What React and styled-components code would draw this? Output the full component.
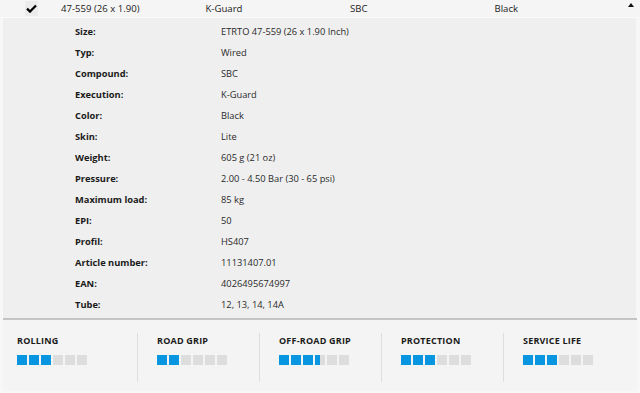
import * as React from "react";
import styled, { createGlobalStyle } from "styled-components";

const specs = [
  ["Size:", "ETRTO 47-559 (26 x 1.90 Inch)"],
  ["Typ:", "Wired"],
  ["Compound:", "SBC"],
  ["Execution:", "K-Guard"],
  ["Color:", "Black"],
  ["Skin:", "Lite"],
  ["Weight:", "605 g (21 oz)"],
  ["Pressure:", "2.00 - 4.50 Bar (30 - 65 psi)"],
  ["Maximum load:", "85 kg"],
  ["EPI:", "50"],
  ["Profil:", "HS407"],
  ["Article number:", "11131407.01"],
  ["EAN:", "4026495674997"],
  ["Tube:", "12, 13, 14, 14A"],
];

const ratings = [
  ["Rolling", 3],
  ["Road grip", 2],
  ["Off-road grip", 3.5],
  ["Protection", 3],
  ["Service life", 3],
];

const GlobalStyle = createGlobalStyle`
  body {
    margin: 0;
    background: #f7f7f7;
    font-family: "Open Sans", "DejaVu Sans", sans-serif;
    color: #333;
  }
`;

const Rating = ({ label, value }) => {
  const cells = [];
  for (let i = 0; i < 6; i++) {
    const fill = Math.max(0, Math.min(1, value - i));
    cells.push(
      <Cell key={i}>
        {fill > 0 && <CellFill style={{ width: `${fill * 100}%` }} />}
      </Cell>
    );
  }
  return (
    <RatingCol>
      <RatingLabel>{label}</RatingLabel>
      <Cells>{cells}</Cells>
    </RatingCol>
  );
};

const App = () => {
  return (
    <Wrapper>
      <GlobalStyle />
      <HeadRow>
        <CheckCell>
          <CheckBox>
            <svg width="11" height="9" viewBox="0 0 11 9">
              <path d="M1 4.6 L4 7.6 L10 1.4" fill="none" stroke="#000" strokeWidth="2.2" />
            </svg>
          </CheckBox>
        </CheckCell>
        <HeadCell>47-559 (26 x 1.90)</HeadCell>
        <HeadCell>K-Guard</HeadCell>
        <HeadCell>SBC</HeadCell>
        <HeadCell>Black</HeadCell>
        <Toggle />
      </HeadRow>
      <Details>
        {specs.map(([k, v]) => (
          <SpecRow key={k}>
            <SpecKey>{k}</SpecKey>
            <SpecValue>{v}</SpecValue>
          </SpecRow>
        ))}
      </Details>
      <Ratings>
        {ratings.map(([l, v]) => (
          <Rating key={l} label={l} value={v} />
        ))}
      </Ratings>
    </Wrapper>
  );
};

const Wrapper = styled.div`
  width: 640px;
  height: 393px;
  overflow: hidden;
`;

const HeadRow = styled.div`
  position: relative;
  display: grid;
  grid-template-columns: 61px 144.5px 144.5px 144.5px 1fr;
  align-items: center;
  height: 17px;
  background: #f5f5f5;
  border-bottom: 1px solid #fbfbfb;
  font-size: 9.6px;
  color: #222;
`;

const CheckCell = styled.div`
  display: flex;
  padding-left: 25px;
`;

const CheckBox = styled.div`
  width: 13px;
  height: 15px;
  background: #ebebeb;
  display: flex;
  align-items: center;
  justify-content: center;
`;

const HeadCell = styled.div`
  white-space: nowrap;
`;

const Toggle = styled.span`
  position: absolute;
  right: 6px;
  top: 3px;
  width: 0;
  height: 0;
  border-left: 3px solid transparent;
  border-right: 3px solid transparent;
  border-bottom: 4px solid #111;
`;

const Details = styled.div`
  margin: 0 3px;
  padding: 3px 0 3px;
  background: #efefef;
  border-right: 1px solid #f7f7f7;
`;

const SpecRow = styled.div`
  display: grid;
  grid-template-columns: 146px 1fr;
  align-items: center;
  height: 21px;
  padding-left: 72px;
  font-size: 9.3px;
`;

const SpecKey = styled.div`
  font-weight: 700;
  color: #1a1a1a;
`;

const SpecValue = styled.div`
  color: #2a2a2a;
`;

const Ratings = styled.div`
  margin: 0 3px;
  height: 73px;
  box-sizing: border-box;
  border-top: 2px solid #c4c4c4;
  background: #f4f4f4;
  display: grid;
  grid-template-columns: 120px repeat(4, 122px);
  padding: 13px 0 0 14px;
  align-items: start;
`;

const RatingCol = styled.div`
  height: 49px;
  box-sizing: border-box;
  padding-top: 3px;
  & + & {
    border-left: 1px solid #dedede;
    padding-left: 19px;
  }
`;

const RatingLabel = styled.div`
  font-size: 9px;
  font-weight: 700;
  text-transform: uppercase;
  letter-spacing: 0.2px;
  color: #1a1a1a;
  line-height: 10px;
`;

const Cells = styled.div`
  display: flex;
  gap: 2px;
  margin-top: 9px;
`;

const Cell = styled.div`
  position: relative;
  width: 10px;
  height: 10px;
  background: #dddddd;
`;

const CellFill = styled.div`
  position: absolute;
  left: 0;
  top: 0;
  bottom: 0;
  background: #0796df;
`;

export default App;
